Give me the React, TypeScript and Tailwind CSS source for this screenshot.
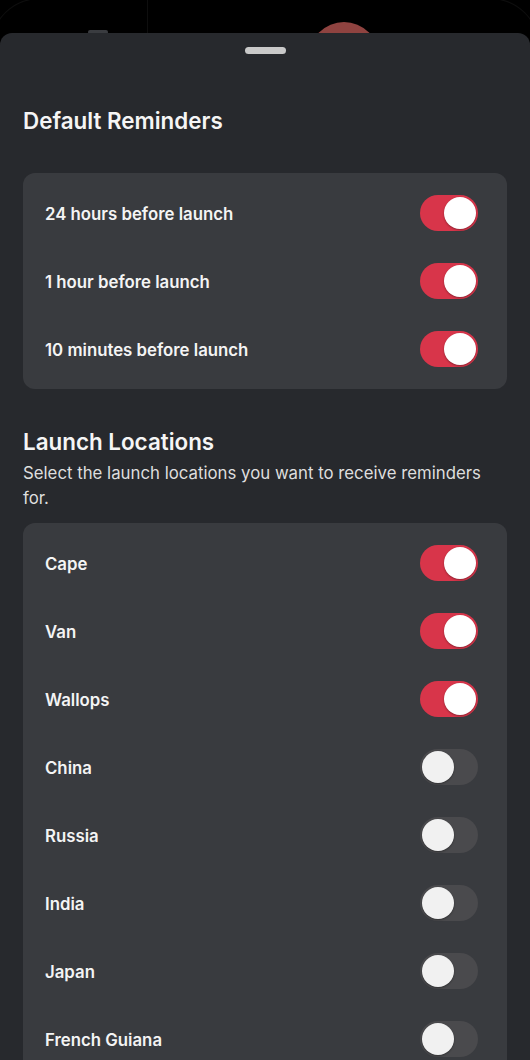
import React from 'react';

type Item = { label: string; on: boolean };

const REMINDERS: Item[] = [
  { label: '24 hours before launch', on: true },
  { label: '1 hour before launch', on: true },
  { label: '10 minutes before launch', on: true },
];

const LOCATIONS: Item[] = [
  { label: 'Cape', on: true },
  { label: 'Van', on: true },
  { label: 'Wallops', on: true },
  { label: 'China', on: false },
  { label: 'Russia', on: false },
  { label: 'India', on: false },
  { label: 'Japan', on: false },
  { label: 'French Guiana', on: false },
];

function Toggle({ on }: { on: boolean }) {
  return (
    <div
      className={`w-[58px] h-[36px] rounded-full flex items-center px-[2px] shrink-0 ${
        on ? 'bg-[#d8354a] justify-end' : 'bg-[#4a4a4d] justify-start'
      }`}
    >
      <div
        className={`w-[32px] h-[32px] rounded-full shadow-[0_1px_2px_rgba(0,0,0,0.35)] ${
          on ? 'bg-white' : 'bg-[#f1f1f1]'
        }`}
      />
    </div>
  );
}

function Card({ items }: { items: Item[] }) {
  return (
    <div className="bg-[#393b3f] rounded-xl py-[6px] pl-[22px] pr-[29px]">
      {items.map((item) => (
        <div key={item.label} className="h-[68px] flex items-center justify-between">
          <span className="mt-[4px] text-[16.8px] font-semibold text-[#f4f4f4]">{item.label}</span>
          <Toggle on={item.on} />
        </div>
      ))}
    </div>
  );
}

export default function App() {
  return (
    <div className="w-[530px] h-[1060px] overflow-hidden bg-black" style={{ fontFamily: 'Inter, "Noto Sans", sans-serif' }}>
      {/* backdrop peeking above the sheet */}
      <div className="relative h-[33px] overflow-hidden">
        <div className="absolute left-[-10px] top-[-2px] w-[158px] h-[120px] rounded-tl-[50px] border-l border-t border-r border-[#0e0e0e]" />
        <div className="absolute right-[-10px] top-[-2px] w-[120px] h-[120px] rounded-tr-[50px] border-t border-r border-[#0e0e0e]" />
        <div className="absolute left-[88px] top-[30px] w-[20px] h-[4px] rounded-sm bg-[#3a3c40]" />
        <div className="absolute left-[309px] top-[22px] w-[70px] h-[70px] rounded-full bg-[#8f4340]" />
      </div>

      <div className="bg-[#27292d] rounded-t-xl px-[23px] pt-[14px] h-[1027px]">
        <div className="flex justify-center">
          <div className="w-[41px] h-[7px] rounded-full bg-[#c9c9c9]" />
        </div>

        <h2 className="mt-[53px] text-[22.4px] leading-[28px] font-semibold text-[#f5f5f5]">Default Reminders</h2>
        <div className="mt-[38px]">
          <Card items={REMINDERS} />
        </div>

        <h2 className="mt-[39px] text-[22.4px] leading-[28px] font-semibold text-[#f5f5f5]">Launch Locations</h2>
        <p className="mt-[5px] text-[16.8px] leading-[25px] text-[#dedede]">
          Select the launch locations you want to receive reminders for.
        </p>
        <div className="mt-[12px]">
          <Card items={LOCATIONS} />
        </div>
      </div>
    </div>
  );
}
